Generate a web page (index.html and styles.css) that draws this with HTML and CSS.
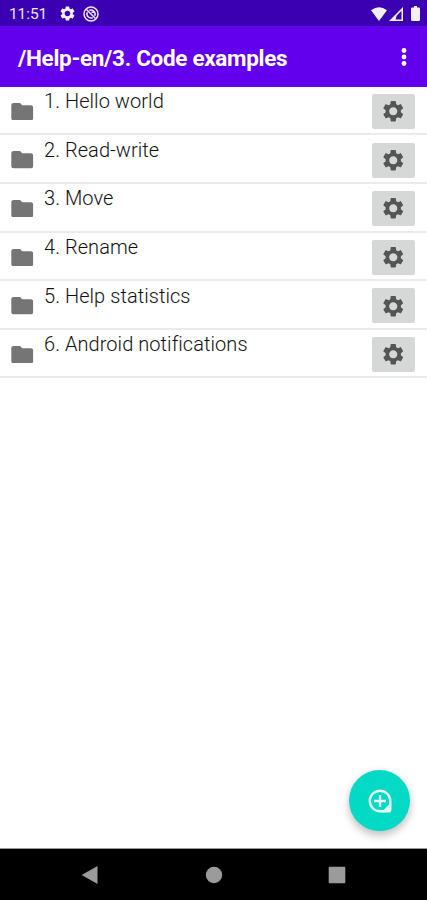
FILE: index.html
```html
<!DOCTYPE html>
<html lang="en">
<head>
<meta charset="utf-8">
<title>Code examples</title>
<link rel="stylesheet" href="styles.css">
</head>
<body>
<svg class="defs" aria-hidden="true">
  <symbol id="gear" viewBox="0 0 24 24"><path d="M19.43 12.98c.04-.32.07-.64.07-.98s-.03-.66-.07-.98l2.110-1.650c.19-.15.24-.42.12-.64l-2-3.460c-.12-.22-.39-.3-.61-.22l-2.490 1c-.52-.4-1.080-.73-1.690-.98l-.38-2.650C14.460 2.180 14.250 2 14 2h-4c-.25 0-.46.18-.49.42l-.38 2.650c-.61.25-1.170.59-1.690.98l-2.490-1c-.23-.09-.49 0-.61.22l-2 3.460c-.13.22-.07.49.12.64l2.110 1.650c-.04.32-.07.65-.07.98s.03.66.07.98l-2.110 1.650c-.19.15-.24.42-.12.64l2 3.460c.12.22.39.3.61.22l2.490-1c.52.4 1.080.73 1.690.98l.38 2.650c.03.24.24.42.49.42h4c.25 0 .46-.18.49-.42l.38-2.650c.61-.25 1.170-.59 1.690-.98l2.490 1c.23.09.49 0 .61-.22l2-3.460c.12-.22.07-.49-.12-.64l-2.110-1.650zM12 16c-2.200 0-4-1.800-4-4s1.800-4 4-4 4 1.800 4 4-1.800 4-4 4z"/></symbol>
  <symbol id="folder" viewBox="2 4 20 16"><path d="M10 4H4c-1.100 0-2 .9-2 2v12c0 1.100.9 2 2 2h16c1.100 0 2-.9 2-2V8c0-1.100-.9-2-2-2h-8l-2-2z"/></symbol>
</svg>
<div class="screen">
  <header class="status">
    <span class="clock">11:51</span>
    <svg class="status-gear"><use href="#gear"/></svg>
    <svg class="status-sync" viewBox="0 0 16 16"><circle cx="8" cy="8" r="7"/><path d="M3.500 3.500l9 9M6.300 4.300a4.100 4.100 0 0 1 5.400 5.400M4.300 6.300a4.100 4.100 0 0 0 5.400 5.400M8.500 6.300h3"/></svg>
    <span class="spacer"></span>
    <svg class="wifi" viewBox="0 0 16 14"><path d="M0 3.200Q8-2.800 16 3.200L8 14z"/></svg>
    <svg class="signal" viewBox="0 0 14 14"><path fill-rule="evenodd" d="M14 0v14H0zM12.500 3.800L7.800 8.500l-1.300 4h6z"/></svg>
    <svg class="battery" viewBox="0 0 9 15"><path d="M3 0h3v1.500h1.800q1.200 0 1.200 1.200v11q0 1.300-1.200 1.300H1.200Q0 15 0 13.700v-11q0-1.200 1.200-1.200H3z"/></svg>
  </header>
  <div class="appbar">
    <h1>/Help-en/3. Code examples</h1>
    <svg class="more" viewBox="0 0 6 20"><circle cx="3" cy="3.500" r="2.400"/><circle cx="3" cy="10" r="2.400"/><circle cx="3" cy="16.500" r="2.400"/></svg>
  </div>
  <main>
    <ul class="list">
      <li><svg class="folder"><use href="#folder"/></svg><span class="name">1. Hello world</span><button aria-label="Settings"><svg><use href="#gear"/></svg></button></li>
      <li><svg class="folder"><use href="#folder"/></svg><span class="name">2. Read-write</span><button aria-label="Settings"><svg><use href="#gear"/></svg></button></li>
      <li><svg class="folder"><use href="#folder"/></svg><span class="name">3. Move</span><button aria-label="Settings"><svg><use href="#gear"/></svg></button></li>
      <li><svg class="folder"><use href="#folder"/></svg><span class="name">4. Rename</span><button aria-label="Settings"><svg><use href="#gear"/></svg></button></li>
      <li><svg class="folder"><use href="#folder"/></svg><span class="name">5. Help statistics</span><button aria-label="Settings"><svg><use href="#gear"/></svg></button></li>
      <li><svg class="folder"><use href="#folder"/></svg><span class="name">6. Android notifications</span><button aria-label="Settings"><svg><use href="#gear"/></svg></button></li>
    </ul>
    <button class="fab" aria-label="Add"><svg viewBox="0 0 24 24"><path d="M12 2.500a9.500 9.500 0 1 0 0 19h7.500q2 0 2-2V12A9.500 9.500 0 0 0 12 2.500z"/><path d="M12 6.500v11M6.500 12h11"/><path class="tail" d="M21.500 14v7.500H14z"/></svg></button>
  </main>
  <nav>
    <svg viewBox="0 0 20 20"><path d="M1.700 10L17.500 1v18z"/></svg>
    <svg viewBox="0 0 20 20"><circle cx="10" cy="10" r="8.200"/></svg>
    <svg viewBox="0 0 20 20"><rect x="1.700" y="1.700" width="16.600" height="16.600" rx="1"/></svg>
  </nav>
</div>
</body>
</html>
```
FILE: styles.css
```css
* { box-sizing: border-box; }
body { margin: 0; font-family: Roboto, sans-serif; background: #fff; }
button { border: 0; padding: 0; }
svg { display: block; flex: none; }
.defs { position: absolute; width: 0; height: 0; }
.screen { width: 427px; height: 900px; display: flex; flex-direction: column; overflow: hidden; }

.status { height: 26px; flex: none; background: #3a00b2; color: #fff; display: flex; align-items: center; padding: 1px 7.500px 0 9px; fill: #f4efff; }
.clock { width: 49.500px; font-size: 15.500px; font-weight: 400; letter-spacing: -.1px; line-height: 24px; color: #eee6ff; }
.status-gear { width: 17px; height: 17px; }
.status-sync { width: 16px; height: 16px; margin-left: 7px; fill: none; stroke: #eee6ff; stroke-width: 1.500; }
.spacer { flex: 1; }
.wifi { width: 16px; height: 14px; }
.signal { width: 14px; height: 14px; margin-left: 1.500px; }
.battery { width: 9px; height: 15px; margin-left: 8px; }

.appbar { height: 60.500px; flex: none; background: #6200ee; display: flex; align-items: center; justify-content: space-between; padding: 2px 20.500px 0 18px; }
h1 { margin: 0; padding-top: 1px; color: #fff; font-size: 22.500px; font-weight: 700; letter-spacing: -.32px; line-height: 30px; white-space: nowrap; }
.more { width: 6px; height: 20px; fill: #fff; }

main { flex: 1; position: relative; background: #fff; border-bottom: 1px solid #999; }
.list { list-style: none; margin: 0; padding: .300px 0 0; }
.list li { height: 48.600px; display: flex; align-items: flex-start; padding: 0 12.500px 0 11px; border-bottom: 2px solid #ebebeb; }
.folder { width: 22.500px; height: 17.500px; margin-top: 16px; fill: #757575; }
.name { flex: 1; margin-left: 10.500px; font-size: 20px; font-weight: 300; letter-spacing: .06px; line-height: 24px; margin-top: 2.500px; color: #111; white-space: nowrap; }
.list button { width: 43px; height: 35px; margin-top: 7.200px; background: #d6d7d7; border-radius: 2px; display: flex; align-items: center; justify-content: center; }
.list button svg { width: 24.500px; height: 24.500px; fill: #555; }

.fab { position: absolute; right: 17px; bottom: 17px; width: 61px; height: 61px; border-radius: 50%; background: #03dac5; display: flex; align-items: center; justify-content: center; box-shadow: 0 5px 8px rgba(0,0,0,.2), 0 1px 8px rgba(0,0,0,.08); }
.fab svg { width: 26px; height: 26px; fill: none; stroke: #e8fffc; stroke-width: 2.200; }
.fab .tail { fill: #e8fffc; stroke: none; }

nav { height: 51px; flex: none; background: #000; display: flex; justify-content: space-between; align-items: center; padding: 0 80px; }
nav svg { width: 20px; height: 20px; fill: #9b9b9b; }
```
